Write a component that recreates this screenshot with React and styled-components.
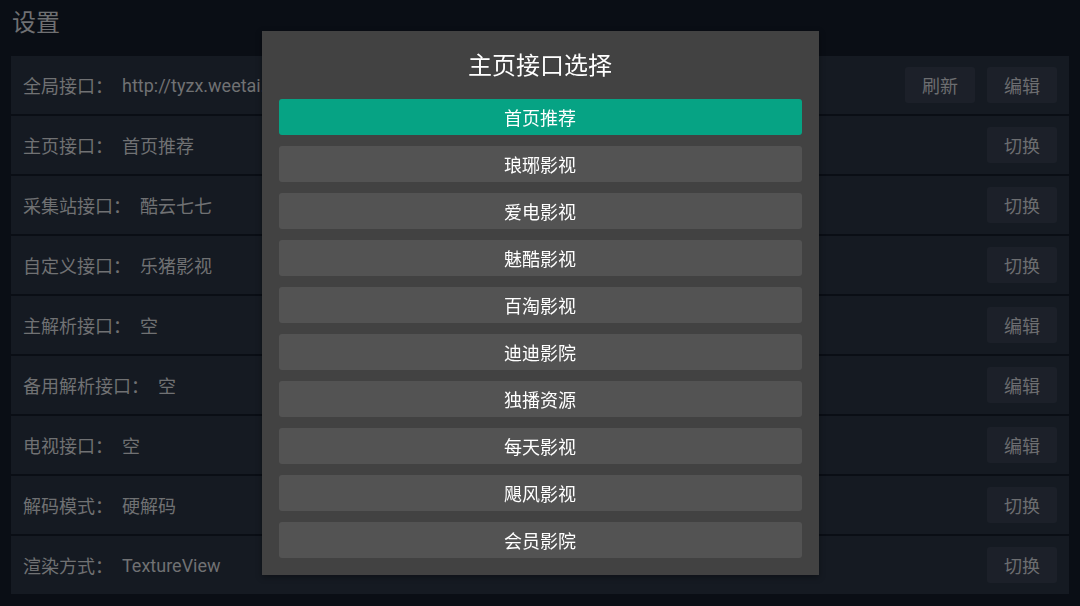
import React from "react";
import styled, { createGlobalStyle } from "styled-components";

const GlobalStyle = createGlobalStyle`
  * {
    box-sizing: border-box;
  }
  html, body {
    margin: 0;
    padding: 0;
    background: #0a0e15;
    font-family: "Roboto", "Noto Sans CJK SC", sans-serif;
  }
`;

const settings = [
  { label: "全局接口：", value: "http://tyzx.weetai.cn/api/tv/config.json", actions: ["刷新", "编辑"] },
  { label: "主页接口：", value: "首页推荐", actions: ["切换"] },
  { label: "采集站接口：", value: "酷云七七", actions: ["切换"] },
  { label: "自定义接口：", value: "乐猪影视", actions: ["切换"] },
  { label: "主解析接口：", value: "空", actions: ["编辑"] },
  { label: "备用解析接口：", value: "空", actions: ["编辑"] },
  { label: "电视接口：", value: "空", actions: ["编辑"] },
  { label: "解码模式：", value: "硬解码", actions: ["切换"] },
  { label: "渲染方式：", value: "TextureView", actions: ["切换"] },
];

const sources = [
  "首页推荐",
  "琅琊影视",
  "爱电影视",
  "魅酷影视",
  "百淘影视",
  "迪迪影院",
  "独播资源",
  "每天影视",
  "飓风影视",
  "会员影院",
];

export default function App() {
  const selected = 0;
  return (
    <Page>
      <GlobalStyle />
      <Header>设置</Header>
      <Panel>
        {settings.map((item) => (
          <Row key={item.label}>
            <Label>{item.label}</Label>
            <Value>{item.value}</Value>
            <Actions>
              {item.actions.map((a) => (
                <ActionButton key={a}>{a}</ActionButton>
              ))}
            </Actions>
          </Row>
        ))}
      </Panel>

      <Overlay>
        <Dialog>
          <DialogTitle>主页接口选择</DialogTitle>
          <SourceList>
            {sources.map((name, i) => (
              <SourceItem key={name} active={i === selected}>
                {name}
              </SourceItem>
            ))}
          </SourceList>
        </Dialog>
      </Overlay>
    </Page>
  );
}

const Page = styled.div`
  width: 1080px;
  height: 606px;
  overflow: hidden;
  background: #0a0e15;
`;

const Header = styled.div`
  height: 46px;
  line-height: 46px;
  padding-left: 12px;
  font-size: 24px;
  color: #6f7072;
`;

const Panel = styled.div`
  margin: 10px 11px 0;
  display: flex;
  flex-direction: column;
  gap: 2px;
`;

const Row = styled.div`
  height: 58px;
  display: flex;
  align-items: center;
  padding: 0 12px;
  background: #151a22;
  font-size: 18px;
  color: #707173;
`;

const Label = styled.span`
  white-space: nowrap;
`;

const Value = styled.span`
  margin-left: 9px;
  white-space: nowrap;
  overflow: hidden;
  flex: 1;
`;

const Actions = styled.div`
  display: flex;
  gap: 12px;
`;

const ActionButton = styled.div`
  width: 70px;
  height: 36px;
  border-radius: 3px;
  background: #1c2029;
  color: #6c6d70;
  font-size: 18px;
  display: flex;
  align-items: center;
  justify-content: center;
`;

const Overlay = styled.div`
  position: fixed;
  inset: 0;
  display: flex;
  align-items: center;
  justify-content: center;
`;

const Dialog = styled.div`
  width: 557px;
  height: 544px;
  background: #424242;
  padding: 0 17px 17px;
  box-shadow: 0 2px 6px rgba(0, 0, 0, 0.35);
`;

const DialogTitle = styled.div`
  height: 68px;
  padding-top: 2px;
  line-height: 66px;
  text-align: center;
  font-size: 24px;
  color: #ffffff;
`;

const SourceList = styled.div`
  display: flex;
  flex-direction: column;
  gap: 11px;
`;

const SourceItem = styled.div`
  height: 36px;
  border-radius: 3px;
  background: ${({ active }) => (active ? "#06a384" : "#535353")};
  color: #ffffff;
  font-size: 18px;
  display: flex;
  align-items: center;
  justify-content: center;
`;
